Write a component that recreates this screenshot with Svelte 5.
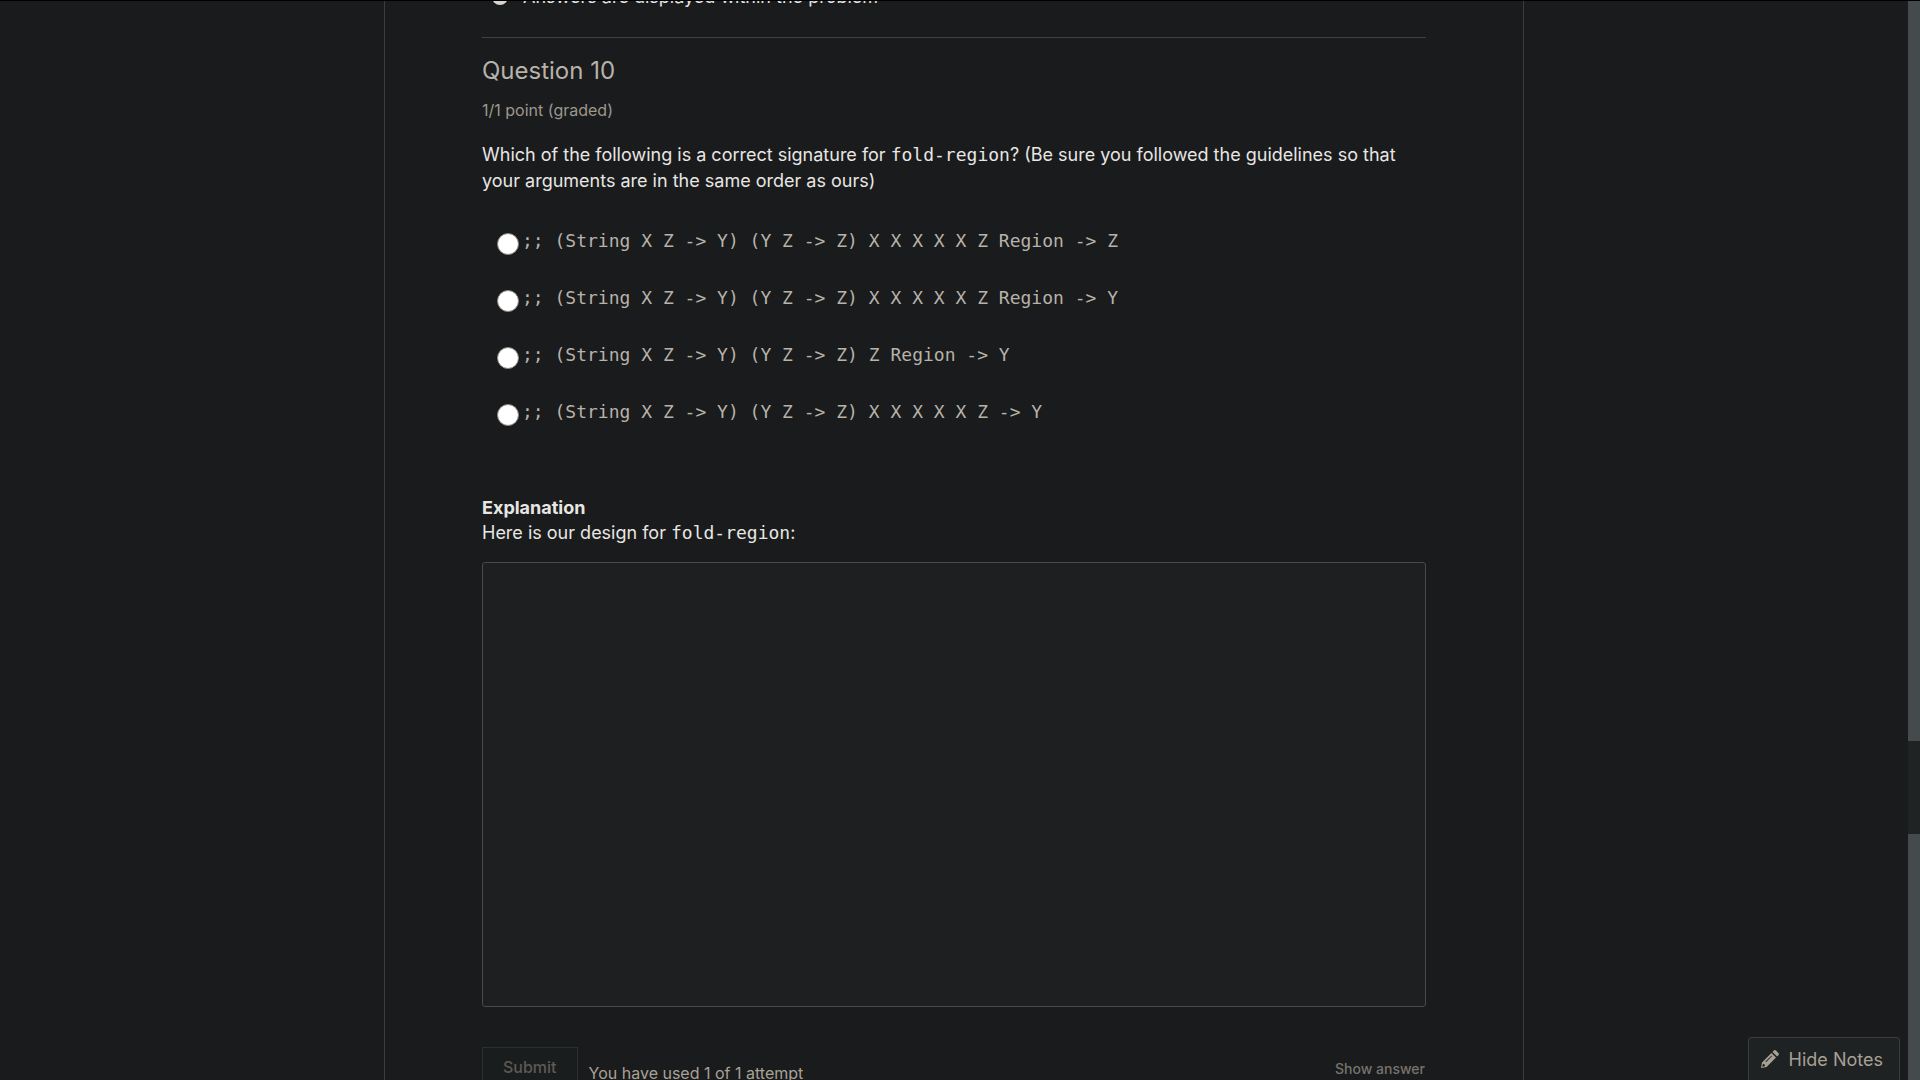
<script>
  const options = [
    ';; (String X Z -> Y) (Y Z -> Z) X X X X X Z Region -> Z',
    ';; (String X Z -> Y) (Y Z -> Z) X X X X X Z Region -> Y',
    ';; (String X Z -> Y) (Y Z -> Z) Z Region -> Y',
    ';; (String X Z -> Y) (Y Z -> Z) X X X X X Z -> Y'
  ];
  let selected = $state(null);
</script>

<div class="page">
  <div class="scroller">
    <main class="column">
      <div class="notice">
        <svg viewBox="0 0 16 16" aria-hidden="true">
          <circle cx="8" cy="8" r="8" fill="#d8d4cf" />
          <path d="M7 3h2v2H7zM6 7h3v4h1v1H6v-1h1V8H6z" fill="#1a1b1c" />
        </svg>
        <span>Answers are displayed within the problem</span>
      </div>

      <section class="problem">
        <h3>Question 10</h3>
        <p class="progress">1/1 point (graded)</p>

        <form onsubmit={(e) => e.preventDefault()}>
          <p class="prompt" id="prompt">
            Which of the following is a correct signature for <code>fold-region</code>? (Be sure you
            followed the guidelines so that your arguments are in the same order as ours)
          </p>

          <div class="options" role="radiogroup" aria-labelledby="prompt">
            {#each options as option, i}
              <label>
                <input type="radio" name="signature" value={i} bind:group={selected} />
                <code>{option}</code>
              </label>
            {/each}
          </div>

          <div class="explanation">
            <strong>Explanation</strong>
            <p>Here is our design for <code>fold-region</code>:</p>
            <div class="design"></div>
          </div>

          <div class="action">
            <button class="submit" type="submit" disabled>Submit</button>
            <span class="attempts">You have used 1 of 1 attempt</span>
            <button class="show" type="button">Show answer</button>
          </div>
        </form>
      </section>
    </main>
  </div>

  <div class="track" aria-hidden="true">
    <div class="shade before"></div>
    <div class="thumb"></div>
    <div class="shade after"></div>
  </div>

  <button class="notes" type="button">
    <svg viewBox="0 0 18 18" aria-hidden="true">
      <path
        fill-rule="evenodd"
        d="M0 18 1 12.4 10.4 3l4.600 4.600L5.600 17zM1.700 14.500 1.300 16.700 3.500 16.300 4.200 15.300 2.700 13.800zM4.400 11.600 10.600 5.400 11.200 6 5 12.200z"
      />
      <path d="m11.500 1.900 1.300-1.300q1.100-1.100 2.200 0l2.400 2.400q1.100 1.100 0 2.200l-1.300 1.300z" />
    </svg>
    Hide Notes
  </button>
</div>

<style>
  :global(body) {
    margin: 0;
    background: #1a1b1c;
  }

  .page {
    position: relative;
    display: flex;
    height: 100vh;
    box-sizing: border-box;
    overflow: hidden;
    border-top: 1px solid #000;
    background: #1a1b1c;
    color: #e8e6e3;
    font: 18px/26px Inter, sans-serif;
  }

  .scroller {
    display: flex;
    flex: 1;
    justify-content: center;
    overflow: hidden;
  }

  .column {
    flex: 0 1 1140px;
    box-sizing: border-box;
    min-height: 100%;
    padding: 0 97px;
    border: solid #3a3d3f;
    border-width: 0 1px;
  }

  code {
    font: 18px/26px "DejaVu Sans Mono", monospace;
  }

  .notice {
    display: flex;
    align-items: center;
    gap: 15px;
    margin-top: -17px;
    padding: 0 10px;
  }

  .notice svg {
    width: 16px;
    height: 16px;
  }

  .problem {
    margin-top: 27px;
    padding-top: 16px;
    border-top: 1px solid #3f4244;
  }

  h3 {
    margin: 0;
    color: #b7b2aa;
    font-size: 24px;
    font-weight: 400;
    line-height: 34px;
  }

  p {
    margin: 0;
  }

  .progress {
    margin-top: 9px;
    color: #9d978c;
    font-size: 16px;
  }

  .prompt {
    margin-top: 19px;
  }

  .options {
    display: grid;
    gap: 21px;
    margin-top: 22px;
    padding: 7px 15px 9px;
    color: #b7b2aa;
  }

  .options label {
    display: flex;
    align-items: center;
    gap: 3px;
    height: 36px;
  }

  .options input {
    appearance: none;
    box-sizing: border-box;
    width: 22px;
    height: 22px;
    margin: 5px 0 0;
    border: 1px solid #8b857c;
    border-radius: 50%;
    background: #fff;
  }

  .options input:checked {
    border: 7px solid #fff;
    background: #2a6ea8;
  }

  .explanation {
    margin-top: 56px;
  }

  .explanation strong {
    display: block;
    font-weight: 700;
    line-height: 25px;
  }

  .design {
    height: 443px;
    margin-top: 16px;
    border: 1px solid #484b4d;
    border-radius: 3px;
    background: #1e1f21;
  }

  .action {
    display: flex;
    align-items: flex-start;
    gap: 11px;
    margin-top: 40px;
  }

  button {
    font-family: Inter, sans-serif;
    cursor: pointer;
  }

  .submit {
    height: 40px;
    padding: 0 20px;
    border: 1px solid #2b2f31;
    background: #1a1d1e;
    color: #5e5a53;
    font-size: 16px;
    font-weight: 500;
  }

  .attempts {
    margin-top: 13px;
    color: #a8a297;
    font-size: 16px;
  }

  .show {
    margin: 9px 0 0 auto;
    padding: 0 1px;
    border: 0;
    background: none;
    color: #77736b;
    font-size: 14px;
    font-weight: 500;
    line-height: 26px;
  }

  .track {
    display: flex;
    flex: 0 0 12px;
    flex-direction: column;
    background: #202324;
  }

  .shade {
    background: #454a4d;
  }

  .before {
    flex: 740;
  }

  .thumb {
    flex: 93;
  }

  .after {
    flex: 246;
  }

  .notes {
    position: absolute;
    right: 20px;
    bottom: 0;
    display: flex;
    align-items: center;
    gap: 10px;
    height: 43px;
    padding: 0 16px 0 12px;
    border: 1px solid #3a3e40;
    border-bottom: 0;
    border-radius: 4px 4px 0 0;
    background: #1f2223;
    color: #a8a095;
    font-size: 18px;
  }

  .notes svg {
    width: 18px;
    height: 18px;
    fill: currentColor;
  }
</style>
